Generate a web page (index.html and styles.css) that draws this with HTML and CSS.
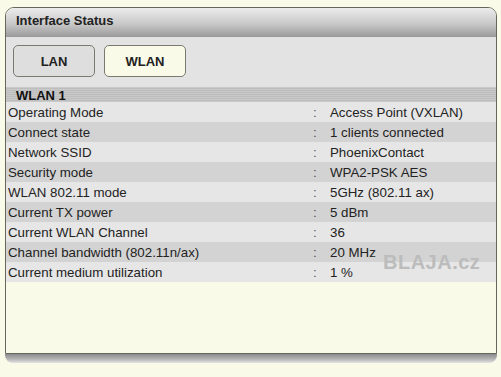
FILE: index.html
```html
<!DOCTYPE html>
<html lang="en">

<head>
    <meta charset="UTF-8">
    <title>Interface Status</title>
    <link rel="stylesheet" href="styles.css">
</head>

<body>
    <div class="panel">
        <div class="panel-head">Interface Status</div>
        <div class="tabs">
            <button class="tab">LAN</button>
            <button class="tab active">WLAN</button>
        </div>
        <div class="section">WLAN 1</div>
        <table class="status">
            <tr><td class="key">Operating Mode</td><td class="sep">:</td><td>Access Point (VXLAN)</td></tr>
            <tr><td class="key">Connect state</td><td class="sep">:</td><td>1 clients connected</td></tr>
            <tr><td class="key">Network SSID</td><td class="sep">:</td><td>PhoenixContact</td></tr>
            <tr><td class="key">Security mode</td><td class="sep">:</td><td>WPA2-PSK AES</td></tr>
            <tr><td class="key">WLAN 802.11 mode</td><td class="sep">:</td><td>5GHz (802.11 ax)</td></tr>
            <tr><td class="key">Current TX power</td><td class="sep">:</td><td>5 dBm</td></tr>
            <tr><td class="key">Current WLAN Channel</td><td class="sep">:</td><td>36</td></tr>
            <tr><td class="key">Channel bandwidth (802.11n/ax)</td><td class="sep">:</td><td>20 MHz</td></tr>
            <tr><td class="key">Current medium utilization</td><td class="sep">:</td><td>1 %</td></tr>
        </table>
        <div class="filler"></div>
        <span class="mark">BLAJA.cz</span>
    </div>
    <div class="panel-foot"></div>
</body>

</html>
```

FILE: styles.css
```css
body {
    margin: 0;
    padding: 7px 5px 0 5px;
    background: #fafae9;
    font-family: "Liberation Sans", Arial, sans-serif;
    color: #222;
}

.panel {
    position: relative;
    width: 490px;
    border: 1px solid #66665c;
    border-radius: 9px 9px 0 0;
    background: #fafae9;
    overflow: hidden;
}

.panel-head {
    height: 29px;
    line-height: 25px;
    padding-left: 10px;
    font-size: 13px;
    font-weight: bold;
    color: #222;
    background: linear-gradient(#ececec, #c8c8c8 55%, #9a9a9a);
}

.tabs {
    display: flex;
    gap: 9px;
    padding: 8px 7px 10px 7px;
    background: #e3e3e3;
}

.tab {
    width: 82px;
    height: 32px;
    border: 1px solid #7a7a72;
    border-radius: 5px;
    background: #dedede;
    font-family: "Liberation Sans", Arial, sans-serif;
    font-size: 13px;
    font-weight: bold;
    color: #222;
}

.tab.active {
    background: #fafae9;
}

.section {
    height: 15px;
    line-height: 18px;
    padding-left: 10px;
    font-size: 13px;
    font-weight: bold;
    color: #111;
    background: repeating-linear-gradient(#c9c9c9 0, #c9c9c9 1px, #bdbdbd 1px, #bdbdbd 2px);
    overflow: hidden;
}

.status {
    width: 100%;
    border-collapse: collapse;
    font-size: 13.3px;
    color: #222;
}

.status td {
    height: 20px;
    padding: 0;
}

.status tr:nth-child(odd) {
    background: #e6e6e6;
}

.status tr:nth-child(even) {
    background: #d3d3d3;
}

.status .key {
    width: 305px;
    padding-left: 2px;
}

.status .sep {
    width: 17px;
    color: #555;
}

.filler {
    height: 71px;
}

.mark {
    position: absolute;
    left: 377px;
    top: 243px;
    font-size: 20px;
    font-weight: bold;
    color: #bcbcbc;
    letter-spacing: 0.5px;
}

.panel-foot {
    width: 492px;
    height: 9px;
    border-radius: 0 0 8px 8px;
    background: linear-gradient(#8a8a8a, #b8b8b8 60%, #e4e4e4);
}
```
